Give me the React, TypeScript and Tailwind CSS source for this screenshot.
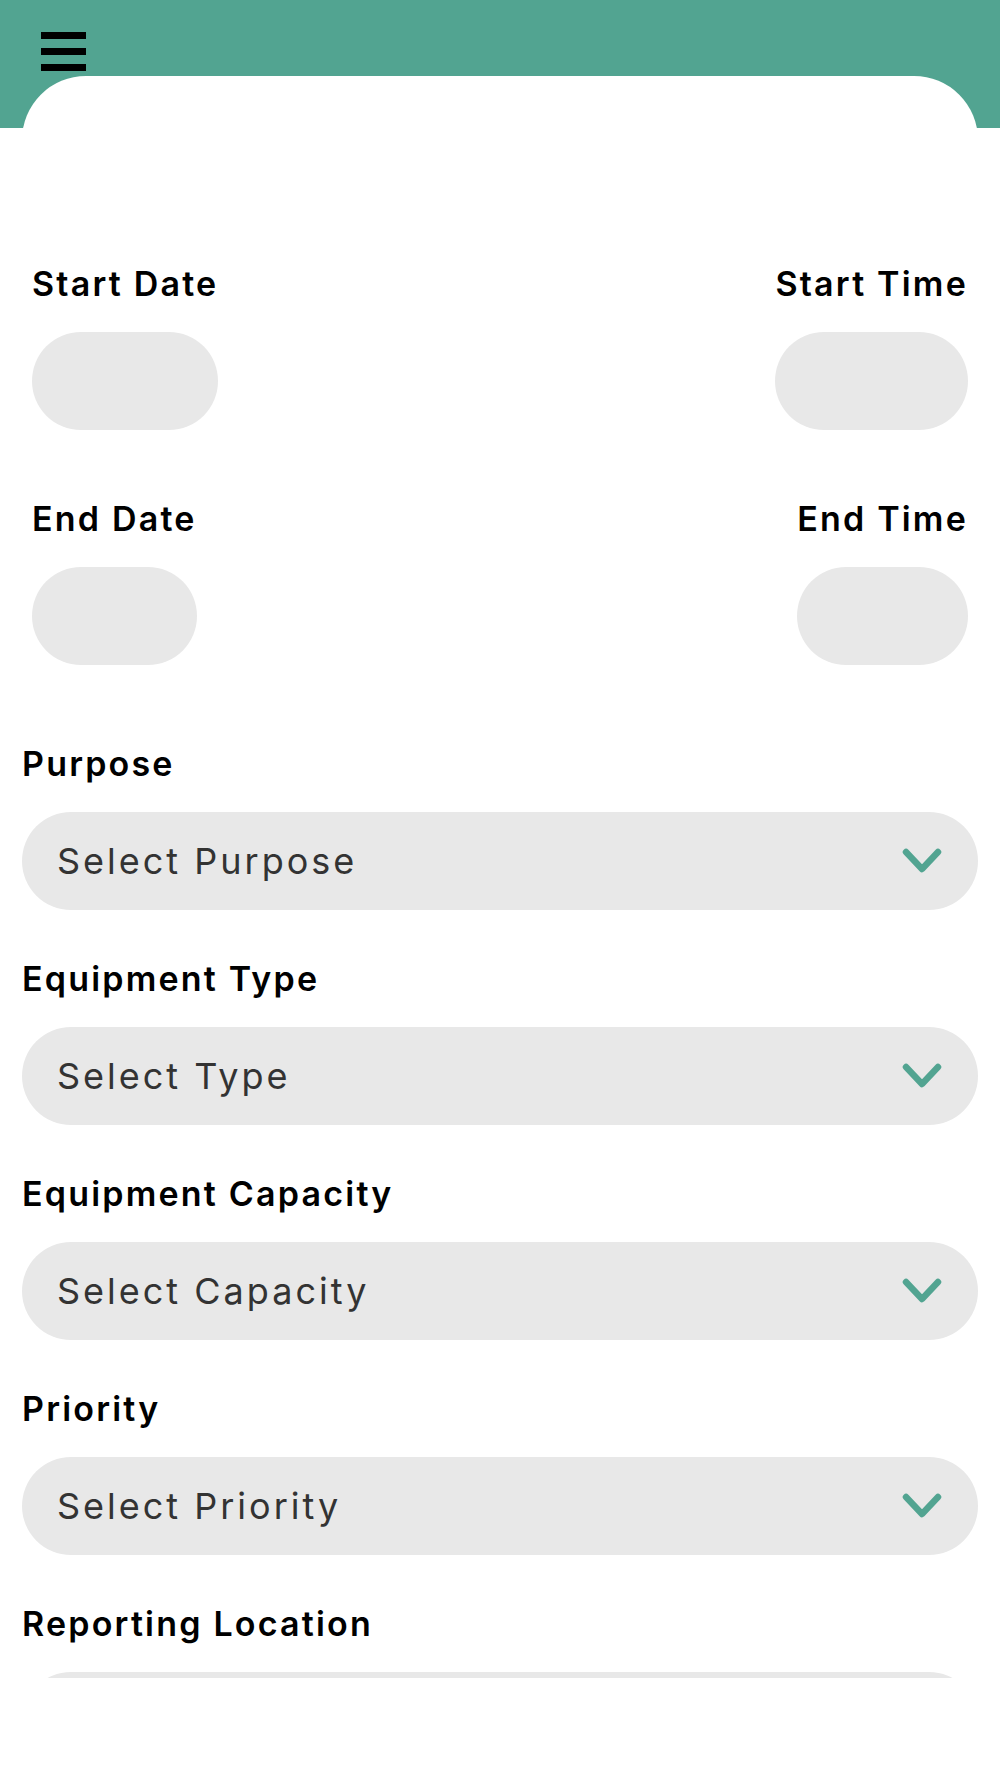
import React from 'react';

const font = { fontFamily: 'Inter, "Noto Sans", sans-serif' };

const Chevron: React.FC = () => (
  <svg width="40" height="26" viewBox="0 0 40 26" fill="none">
    <path d="M4 4 L20 21 L36 4" stroke="#52a491" strokeWidth="6.5" strokeLinecap="round" strokeLinejoin="round" />
  </svg>
);

const DateField: React.FC<{ label: string; align?: 'left' | 'right' }> = ({ label, align = 'left' }) => (
  <div className={align === 'right' ? 'flex flex-col items-end' : 'flex flex-col items-start'}>
    <div className="text-[34px] leading-[40px] font-semibold tracking-[2.2px] text-black whitespace-nowrap">{label}</div>
    <div className="mt-[28px] h-[98px] w-full rounded-full bg-[#e8e8e8]" />
  </div>
);

const SelectField: React.FC<{ label: string; placeholder: string }> = ({ label, placeholder }) => (
  <div className="mb-[49px]">
    <div className="text-[34px] leading-[40px] font-semibold tracking-[2.2px] text-black">{label}</div>
    <div className="mt-[28px] flex h-[98px] items-center justify-between rounded-full bg-[#e8e8e8] pl-[35px] pr-[36px]">
      <span className="text-[36px] tracking-[3px] text-[#333333]">{placeholder}</span>
      <Chevron />
    </div>
  </div>
);

export default function App() {
  return (
    <div className="h-[1778px] overflow-hidden bg-white" style={font}>
      <div className="h-[128px] bg-[#52a491] pl-[41px] pt-[32px]">
        <div className="flex w-[45px] flex-col gap-[9px]">
          <div className="h-[7px] bg-black" />
          <div className="h-[7px] bg-black" />
          <div className="h-[7px] bg-black" />
        </div>
      </div>
      <div className="relative mx-[22px] -mt-[52px] h-[1602px] overflow-hidden rounded-t-[64px] bg-white pt-[188px]">
        <div className="flex justify-between px-[10px]">
          <DateField label="Start Date" />
          <DateField label="Start Time" align="right" />
        </div>
        <div className="mt-[69px] flex justify-between px-[10px]">
          <DateField label="End Date" />
          <DateField label="End Time" align="right" />
        </div>
        <div className="mt-[79px]">
          <SelectField label="Purpose" placeholder="Select Purpose" />
          <SelectField label="Equipment Type" placeholder="Select Type" />
          <SelectField label="Equipment Capacity" placeholder="Select Capacity" />
          <SelectField label="Priority" placeholder="Select Priority" />
          <SelectField label="Reporting Location" placeholder="Select Location" />
        </div>
      </div>
    </div>
  );
}
